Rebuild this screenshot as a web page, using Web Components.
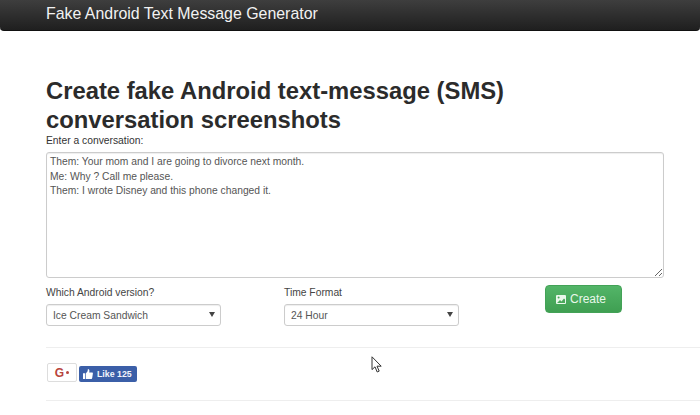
<!DOCTYPE html>
<html lang="en"><head><meta charset="utf-8"><title>Fake Android Text Message Generator</title>
<style>
html,body{margin:0;padding:0;background:#fff;overflow:hidden}
body{font-family:"Liberation Sans",Arial,sans-serif;color:#333;width:700px;height:415px;position:relative}
</style></head><body>
<app-navbar>Fake Android Text Message Generator</app-navbar>
<app-main>
  <page-title>Create fake Android text-message (SMS) conversation screenshots</page-title>
  <convo-form></convo-form>
  <rule-line></rule-line>
  <social-row></social-row>
  <rule-line></rule-line>
</app-main>
<mouse-cursor></mouse-cursor>
<script>
function def(name,html){customElements.define(name,class extends HTMLElement{constructor(){super();this.attachShadow({mode:"open"}).innerHTML=html;}});}
def("app-navbar",`<style>:host{display:flex;align-items:center;box-sizing:border-box;height:31px;padding:0 0 3px 46px;background:linear-gradient(#3e3e3e,#1f1f1f);border-radius:0 0 4px 4px;color:#f2f2f2;font-size:15.9px;border-bottom:1px solid #111}</style><slot></slot>`);
def("app-main",`<style>:host{display:block;padding:45px 0 0 46px}</style><slot></slot>`);
def("page-title",`<style>:host{display:block;width:480px;font-size:23.8px;font-weight:bold;line-height:29px;color:#2b2b2b}</style><slot></slot>`);
def("convo-form",`<style>
:host{display:block;font-size:10.3px;color:#333;padding-bottom:21px}
label{display:block}
.top{line-height:14px;margin-bottom:4px}
textarea{display:block;box-sizing:border-box;width:618px;height:126px;border:1px solid #ccc;border-radius:3px;padding:2px 3px;margin:0;font:10.3px/14.5px "Liberation Sans",Arial,sans-serif;color:#555;box-shadow:inset 0 1px 1px rgba(0,0,0,.07);outline:none}
.row{display:grid;grid-template-columns:238px 261px 77px;margin-top:7px}
.f{padding-top:1px}
.f label{line-height:14px;margin-bottom:4px;color:#444}
.s{position:relative;width:174.5px;height:22px}
.s::after{content:"";position:absolute;right:6px;top:8px;border:3px solid transparent;border-top:5px solid #444;border-bottom:0}
select{appearance:none;-webkit-appearance:none;display:block;box-sizing:border-box;width:100%;height:22px;border:1px solid #ccc;border-radius:3px;padding:0 6px;font:10.3px "Liberation Sans",Arial,sans-serif;color:#555;background:#fff;box-shadow:inset 0 1px 1px rgba(0,0,0,.07)}
button{box-sizing:border-box;width:77px;height:28px;border:1px solid #43a257;border-radius:4px;background:linear-gradient(#53b568,#3f9f52);color:#e8f7ea;font:12px "Liberation Sans",Arial,sans-serif;display:flex;align-items:center;gap:4px;padding:0 0 0 10px;white-space:nowrap}
svg{display:block}
</style>
<label class="top" for="c">Enter a conversation:</label>
<textarea id="c" spellcheck="false">Them: Your mom and I are going to divorce next month.
Me: Why ? Call me please.
Them: I wrote Disney and this phone changed it.</textarea>
<div class="row">
 <div class="f"><label for="a">Which Android version?</label><div class="s"><select id="a"><option>Ice Cream Sandwich</option></select></div></div>
 <div class="f"><label for="t">Time Format</label><div class="s"><select id="t"><option>24 Hour</option></select></div></div>
 <button type="button"><svg width="10" height="9" viewBox="0 0 10 9"><rect width="10" height="9" rx="1" fill="#eaf7ec"/><circle cx="2.6" cy="2.6" r="1" fill="#4aa95b"/><path d="M1 8l3-3 1.5 1.5L8 3.5 9 4.5V8z" fill="#4aa95b"/></svg>Create</button>
</div>`);
def("rule-line",`<style>:host{display:block;height:1px;background:#eee}</style>`);
def("social-row",`<style>
:host{display:flex;align-items:flex-start;height:52px;box-sizing:border-box;padding:15px 0 0 1px;gap:2px;font-family:"Liberation Sans",Arial,sans-serif}
.g{box-sizing:border-box;width:30px;height:19px;border:1px solid #ddd;border-radius:2px;background:#fff;color:#b8443c;font-size:12px;font-weight:bold;display:flex;align-items:center;justify-content:center}
.g i{display:block;width:3px;height:3px;border-radius:50%;background:#b8443c;margin-left:2px}
.f{box-sizing:border-box;width:58px;height:16px;margin-top:3px;border-radius:2px;background:#3b5fa8;color:#f1f4fb;font-size:8.8px;font-weight:bold;display:flex;align-items:center;gap:4px;padding-left:4px;white-space:nowrap}
svg{display:block;flex:none}
</style>
<div class="g">G<i></i></div>
<div class="f"><svg width="10" height="10" viewBox="0 0 10 10"><path fill="#fff" d="M0 4.2h2.1V10H0zM2.8 4.4 4.6 2.3 4.9 0c1 0 1.6.8 1.5 1.9l-.2 1.6h2.8c.6 0 1 .6.9 1.1l-.7 4.4c-.1.5-.5 1-1.1 1H2.8z"/></svg><span>Like 125</span></div>`);
def("mouse-cursor",`<style>:host{position:absolute;left:371px;top:356px;display:block;width:12px;height:18px}svg{display:block}</style>
<svg width="12" height="18" viewBox="0 0 12 18"><path d="M1 .8V13.6L4 10.8 6.2 16 8.2 15.1 6 10.2H10.2z" fill="#fff" stroke="#333" stroke-width="1"/></svg>`);
</script></body></html>
